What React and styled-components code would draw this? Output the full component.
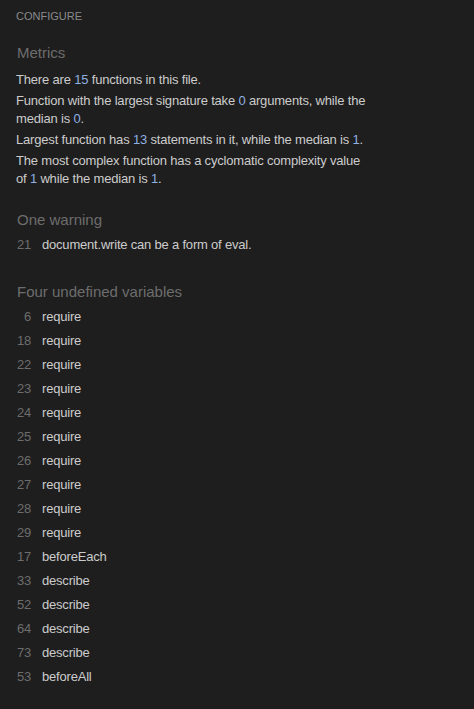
import React from 'react';
import styled, { createGlobalStyle } from 'styled-components';

const GlobalStyle = createGlobalStyle`
  html, body {
    margin: 0;
    padding: 0;
    background: #1e1e1e;
  }
  body {
    font-family: "Liberation Sans", Arial, sans-serif;
    color: #cccccc;
  }
`;

const warnings = [{ line: 21, text: 'document.write can be a form of eval.' }];

const undefinedVars = [
  [6, 'require'], [18, 'require'], [22, 'require'], [23, 'require'],
  [24, 'require'], [25, 'require'], [26, 'require'], [27, 'require'],
  [28, 'require'], [29, 'require'], [17, 'beforeEach'], [33, 'describe'],
  [52, 'describe'], [64, 'describe'], [73, 'describe'], [53, 'beforeAll'],
];

const App = () => {
  return (
    <Panel>
      <GlobalStyle />
      <Label>Configure</Label>

      <Section>
        <Heading>Metrics</Heading>
        <MetricList>
          <Metric>There are <Num>15</Num> functions in this file.</Metric>
          <Metric>
            Function with the largest signature take <Num>0</Num> arguments, while the median is <Num>0</Num>.
          </Metric>
          <Metric>
            Largest function has <Num>13</Num> statements in it, while the median is <Num>1</Num>.
          </Metric>
          <Metric>
            The most complex function has a cyclomatic complexity value of <Num>1</Num> while the median is <Num>1</Num>.
          </Metric>
        </MetricList>
      </Section>

      <Section>
        <Heading>One warning</Heading>
        <List>
          {warnings.map((w) => (
            <Row key={w.line}>
              <LineNo>{w.line}</LineNo>
              <Message>{w.text}</Message>
            </Row>
          ))}
        </List>
      </Section>

      <Section>
        <Heading>Four undefined variables</Heading>
        <List>
          {undefinedVars.map(([line, name], i) => (
            <Row key={i}>
              <LineNo>{line}</LineNo>
              <Message>{name}</Message>
            </Row>
          ))}
        </List>
      </Section>
    </Panel>
  );
};

const Panel = styled.div`
  padding: 10px 16px 20px;
  width: 474px;
  box-sizing: border-box;
`;

const Label = styled.div`
  font-size: 11px;
  line-height: 13px;
  text-transform: uppercase;
  color: #8a8a8a;
  margin-bottom: 20px;
`;

const Section = styled.section`
  margin-bottom: 26px;
`;

const Heading = styled.h3`
  margin: 0 0 2px 1px;
  font-size: 15px;
  font-weight: normal;
  line-height: 20px;
  color: #6d6d6d;
`;

const MetricList = styled.div`
  display: flex;
  flex-direction: column;
  gap: 3px;
  margin: 8px 0 -4px;
  max-width: 354px;
`;

const Metric = styled.p`
  margin: 0;
  font-size: 13px;
  line-height: 18px;
  letter-spacing: -0.18px;
  color: #cccccc;
`;

const Num = styled.span`
  color: #8fb0e2;
`;

const List = styled.div`
  display: flex;
  flex-direction: column;
`;

const Row = styled.div`
  display: flex;
  align-items: center;
  gap: 11px;
  height: 24px;
  font-size: 13px;
  letter-spacing: -0.2px;
`;

const LineNo = styled.span`
  width: 15px;
  text-align: right;
  color: #6d6d6d;
`;

const Message = styled.span`
  color: #cccccc;
`;

export default App;
